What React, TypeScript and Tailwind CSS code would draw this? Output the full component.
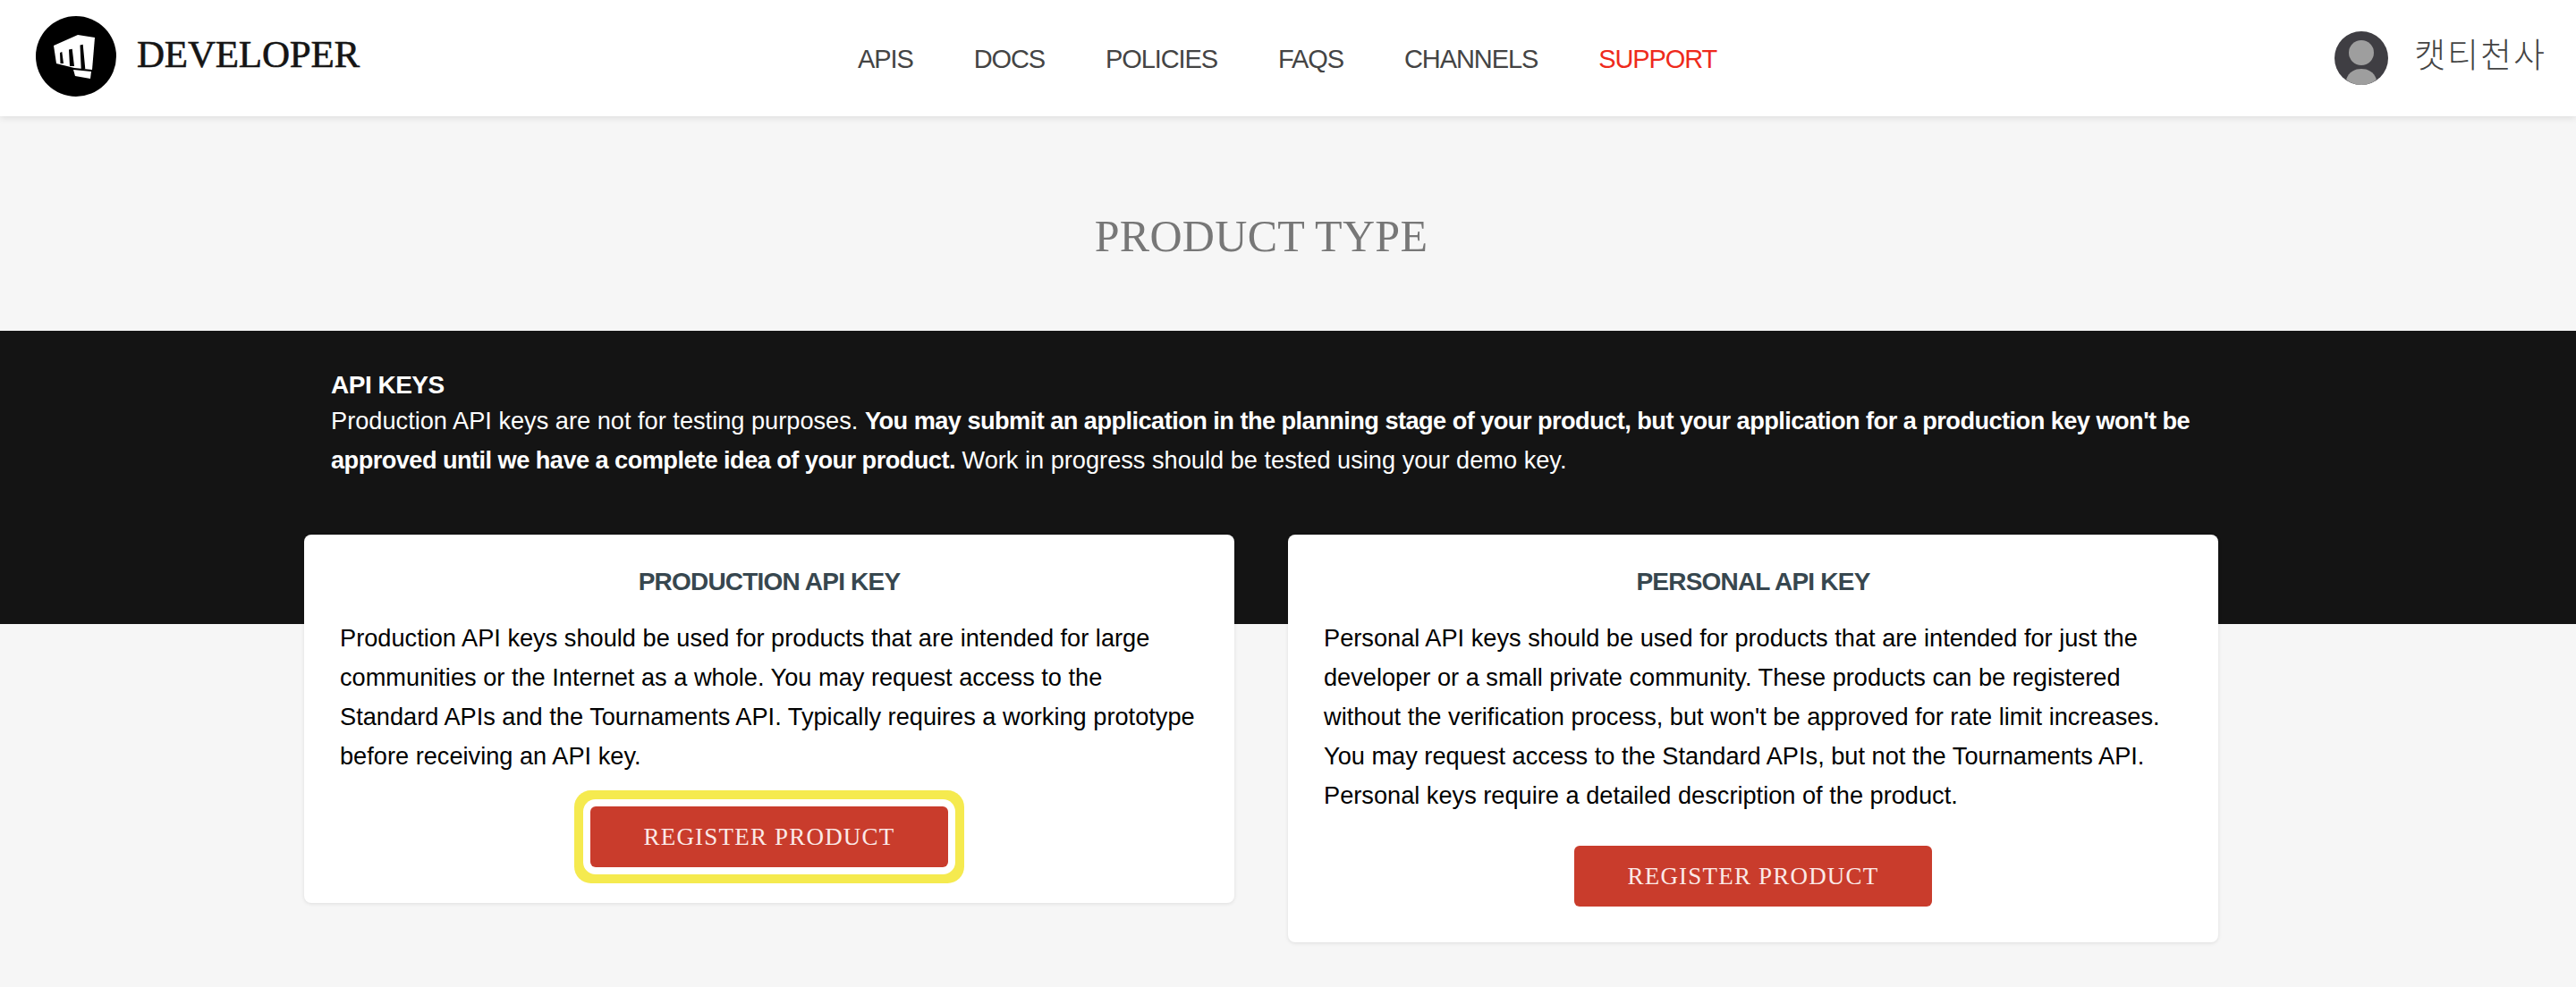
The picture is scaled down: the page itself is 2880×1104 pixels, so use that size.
const bodyFont = "font-['Liberation_Sans',sans-serif]";
const serifFont = "font-['Liberation_Serif',serif]";

const navItems = ["APIS", "DOCS", "POLICIES", "FAQS", "CHANNELS"];

function FistLogo() {
  return (
    <svg viewBox="0 0 90 90" className="w-[90px] h-[90px] shrink-0">
      <circle cx="45" cy="45" r="45" fill="#000" />
      <path d="M20 33 L47 21 L66 24 L63 60 L43 58 L23 53 Z" fill="#fff" />
      <path
        d="M29.3 40 L31 53 L27.5 53 L27 41 Z M40.7 36.7 L43 56 L38 56 L37 37.5 Z M52.7 31.7 L55.3 59 L50.7 59 L49.5 32.5 Z"
        fill="#000"
      />
      <path d="M42 60 L62 62 L61 70 L44 67 Z" fill="#fff" />
    </svg>
  );
}

function Avatar() {
  return (
    <svg viewBox="0 0 60 60" className="w-[60px] h-[60px] shrink-0">
      <circle cx="30" cy="30" r="30" fill="#3f3e43" />
      <circle cx="30" cy="24" r="14" fill="#9e9e9e" />
      <path d="M13 54 C16 45 23 42 30 42 C37 42 44 45 47 54 C42 58 36 60 30 60 C24 60 18 58 13 54 Z" fill="#9e9e9e" />
    </svg>
  );
}

function KeyCard({ title, lines, highlight }: { title: string; lines: string[]; highlight?: boolean }) {
  return (
    <div className="w-[1040px] bg-white rounded-lg shadow-[0_1px_4px_rgba(0,0,0,0.1)] px-10 pt-[31px] pb-10 self-start">
      <h3 className="text-center text-[28px] leading-[44px] font-bold tracking-[-0.8px] text-[#37474f]">{title}</h3>
      <p className="mt-[19px] text-[27.2px] leading-[44px] text-black">
        {lines.map((line) => (
          <span key={line} className="block whitespace-nowrap">{line}</span>
        ))}
      </p>
      <div className="mt-[34px] flex justify-center">
        <button
          className={`w-[400px] h-[68px] rounded-md bg-[#c93c2c] text-[#fbe9e7] text-[27px] tracking-[1.2px] ${serifFont} ${
            highlight ? "shadow-[0_0_0_8px_#fff,0_0_0_18px_#f5ea4f]" : ""
          }`}
        >
          REGISTER PRODUCT
        </button>
      </div>
    </div>
  );
}

export default function App() {
  return (
    <div className={`w-[2880px] h-[1104px] overflow-hidden bg-[#f6f6f6] ${bodyFont}`}>
      <header className="relative z-10 h-[130px] bg-white shadow-[0_2px_8px_rgba(0,0,0,0.1)] flex items-start pl-10 pt-[18px]">
        <FistLogo />
        <span className={`ml-[23px] mt-[18px] w-[251px] whitespace-nowrap text-[43px] leading-[50px] tracking-[-0.2px] [-webkit-text-stroke:0.6px_#151515] text-[#151515] ${serifFont}`}>
          DEVELOPER
        </span>
        <nav className="ml-[555px] mt-[26px] flex gap-[68px] text-[29px] leading-[44px] tracking-[-1.1px] text-[#444]">
          {navItems.map((item) => (
            <span key={item}>{item}</span>
          ))}
          <span className="text-[#ee2a1c]">SUPPORT</span>
        </nav>
        <div className="ml-auto mr-[33px] mt-[17px] flex items-center gap-[29px]">
          <Avatar />
          <span className="text-[38px] leading-[50px] tracking-[2px] font-light text-[#444] font-['Noto_Sans_CJK_KR',sans-serif] -mt-[12px]">캣티천사</span>
        </div>
      </header>

      <div className="w-[2140px] ml-[340px] h-[240px] flex items-center justify-center">
        <h1 className={`text-[50px] tracking-[0.3px] text-[#777] mt-[28px] font-normal ${serifFont}`}>PRODUCT TYPE</h1>
      </div>

      <div className="bg-[#141414] h-[328px]">
        <div className="w-[2140px] ml-[340px] px-[30px] pt-[39px] text-white text-[27.2px] leading-[44px]">
          <div className="font-bold text-[28px] leading-[44px] tracking-[-0.5px] -mb-[4px]">API KEYS</div>
          <p>
            Production API keys are not for testing purposes.{" "}
            <b className="tracking-[-0.55px]">
              You may submit an application in the planning stage of your product, but your application for a production key won't be approved until we have a complete idea of your product.
            </b>{" "}
            Work in progress should be tested using your demo key.
          </p>
        </div>
      </div>

      <div className="w-[2140px] ml-[340px] -mt-[100px] flex gap-[60px] relative">
        <KeyCard
          highlight
          title="PRODUCTION API KEY"
          lines={[
            "Production API keys should be used for products that are intended for large",
            "communities or the Internet as a whole. You may request access to the",
            "Standard APIs and the Tournaments API. Typically requires a working prototype",
            "before receiving an API key.",
          ]}
        />
        <KeyCard
          title="PERSONAL API KEY"
          lines={[
            "Personal API keys should be used for products that are intended for just the",
            "developer or a small private community. These products can be registered",
            "without the verification process, but won't be approved for rate limit increases.",
            "You may request access to the Standard APIs, but not the Tournaments API.",
            "Personal keys require a detailed description of the product.",
          ]}
        />
      </div>
    </div>
  );
}
